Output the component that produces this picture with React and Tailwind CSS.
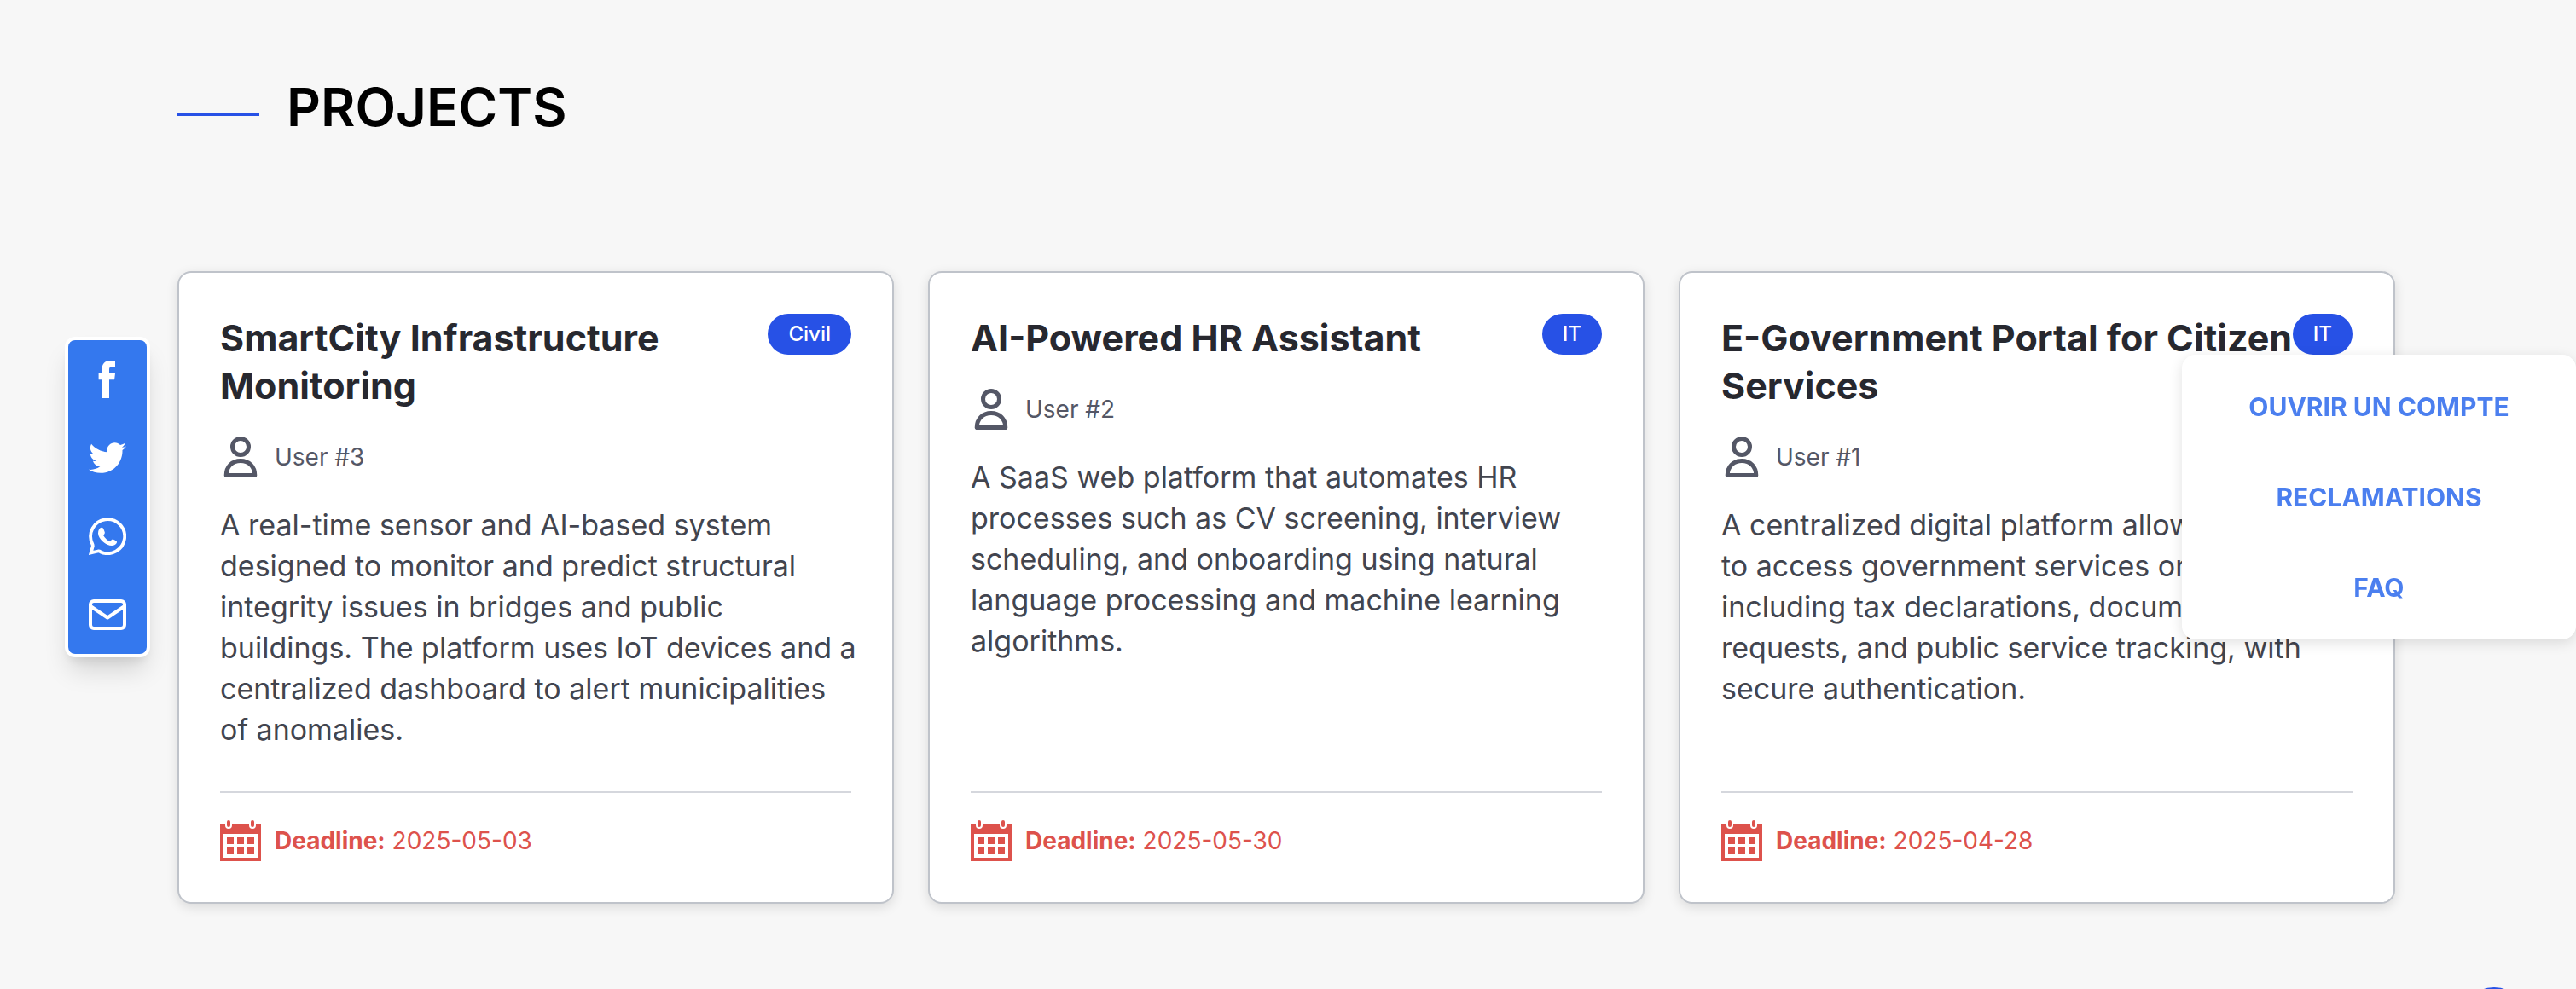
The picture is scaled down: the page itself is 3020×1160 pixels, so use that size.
const projects = [
  {
    title: "SmartCity Infrastructure\nMonitoring",
    tag: "Civil",
    user: "User #3",
    text: "A real-time sensor and AI-based system\ndesigned to monitor and predict structural\nintegrity issues in bridges and public\nbuildings. The platform uses IoT devices and a\ncentralized dashboard to alert municipalities\nof anomalies.",
    deadline: "2025-05-03",
  },
  {
    title: "AI-Powered HR Assistant",
    tag: "IT",
    user: "User #2",
    text: "A SaaS web platform that automates HR\nprocesses such as CV screening, interview\nscheduling, and onboarding using natural\nlanguage processing and machine learning\nalgorithms.",
    deadline: "2025-05-30",
  },
  {
    title: "E-Government Portal for Citizen\nServices",
    tag: "IT",
    user: "User #1",
    text: "A centralized digital platform allowing citizens\nto access government services online,\nincluding tax declarations, document\nrequests, and public service tracking, with\nsecure authentication.",
    deadline: "2025-04-28",
  },
];

function UserIcon() {
  return (
    <svg viewBox="0 0 48 48" className="size-12 shrink-0" fill="none" stroke="currentColor" strokeWidth="5" aria-hidden="true">
      <circle cx="24" cy="12" r="9.5" />
      <path d="M7.2 45.6C7.2 35.5 14 28.5 24 28.5S40.8 35.5 40.8 45.6Z" strokeLinejoin="round" />
    </svg>
  );
}

function CalendarIcon() {
  return (
    <svg viewBox="0 0 48 48" className="size-12 shrink-0" fill="currentColor" aria-hidden="true">
      <path
        fillRule="evenodd"
        d="M0 4h6v2a4 4 0 0 0 8 0V4h20v2a4 4 0 0 0 8 0V4h6v44H0ZM4 16v28h40V16Z"
      />
      <rect x="8" y="0" width="4" height="8" rx="2" />
      <rect x="36" y="0" width="4" height="8" rx="2" />
      <path d="M8 20h8v8H8ZM20 20h8v8h-8ZM32 20h8v8h-8ZM8 32h8v8H8ZM20 32h8v8h-8ZM32 32h8v8h-8Z" />
    </svg>
  );
}

const socials = [
  {
    label: "Facebook",
    icon: (
      <path
        fill="currentColor"
        d="M15.4 44V22.2h-3.8v-7.1h3.8v-4.6C15.4 4 19 0 25.2 0H31v7.2h-3.6c-2.6 0-3.4 1-3.4 3.4v4.5h7l-.9 7.1H24V44Z"
      />
    ),
  },
  {
    label: "Twitter",
    icon: (
      <path
        fill="currentColor"
        transform="scale(.0859375)"
        d="M459.37 151.716c.325 4.548.325 9.097.325 13.645 0 138.72-105.583 298.558-298.558 298.558-59.452 0-114.68-17.219-161.137-47.106 8.447.974 16.568 1.299 25.34 1.299 49.055 0 94.213-16.568 130.274-44.832-46.132-.975-84.792-31.188-98.112-72.772 6.498.974 12.995 1.624 19.818 1.624 9.421 0 18.843-1.3 27.614-3.573-48.081-9.747-84.143-51.98-84.143-102.985v-1.299c13.969 7.797 30.214 12.67 47.431 13.319-28.264-18.843-46.781-51.005-46.781-87.391 0-19.492 5.197-37.36 14.294-52.954 51.655 63.675 129.3 105.258 216.365 109.807-1.624-7.797-2.599-15.918-2.599-24.04 0-57.828 46.782-104.934 104.934-104.934 30.213 0 57.502 12.67 76.67 33.137 23.715-4.548 46.456-13.32 66.599-25.34-7.798 24.366-24.366 44.833-46.132 57.827 21.117-2.273 41.584-8.122 60.426-16.243-14.292 20.791-32.161 39.308-52.628 54.253z"
      />
    ),
  },
  {
    label: "WhatsApp",
    icon: (
      <>
        <path
          fill="none"
          stroke="currentColor"
          strokeWidth="3.8"
          d="M2.6 41.4 4.800 33.600Q4.800 32 4 30.500A20 20 0 1 1 14 40.400Q12.500 39.300 11 39.500Z"
        />
        <path
          fill="currentColor"
          d="M11 18.500C11 14.500 12.600 12.200 14.500 11.900c1.400-.2 2.300.3 2.900 1.700l1.300 3.400c.4 1.200 0 2-1.600 4 2 3.300 4.500 5.600 8 7.300 1.700-2.600 2.600-3.100 3.900-2.500l3.300 1.700c.8.500.9 1.200.5 2.300-.7 2-3 3.200-5.800 3.200C20.500 33 11 25 11 18.500Z"
        />
      </>
    ),
  },
  {
    label: "E-mail",
    icon: (
      <g fill="none" stroke="currentColor" strokeWidth="4" strokeLinejoin="round">
        <rect x="2" y="6" width="40" height="32" rx="4" />
        <path d="M2 12 22 25.500 42 12" />
      </g>
    ),
  },
];

function SocialBar() {
  return (
    <nav
      aria-label="Social"
      className="fixed top-[395px] left-[76px] flex flex-col overflow-hidden rounded-xl border-4 border-white bg-[#3478ee] text-white shadow-[0_20px_30px_-6px_rgba(0,0,0,0.15),0_8px_12px_-4px_rgba(0,0,0,0.08)]"
    >
      {socials.map((s) => (
        <a key={s.label} href="#" aria-label={s.label} className="flex size-[92px] items-center justify-center">
          <svg viewBox="0 0 44 44" className="size-11" aria-hidden="true">
            {s.icon}
          </svg>
        </a>
      ))}
    </nav>
  );
}

function QuickMenu() {
  return (
    <nav
      aria-label="Menu"
      className="fixed top-[416px] right-0 flex w-[462px] flex-col items-center gap-16 rounded-2xl bg-white py-10 text-[30px] leading-[42px] font-bold text-[#4b7fef] shadow-[0_4px_16px_rgba(0,0,0,0.12)]"
    >
      <a href="#">OUVRIR UN COMPTE</a>
      <a href="#">RECLAMATIONS</a>
      <a href="#">FAQ</a>
    </nav>
  );
}

function ProjectCard({ project }) {
  return (
    <article className="flex flex-col rounded-2xl border-2 border-[#bfc3ca] bg-white p-12 shadow-[0_4px_14px_rgba(0,0,0,0.12)]">
      <div className="flex items-start justify-between">
        <h3 className="text-[43px] leading-14 font-bold whitespace-pre text-[#27282f]">{project.title}</h3>
        <span className="shrink-0 rounded-full bg-[#2751e6] px-6 text-[24px] leading-12 font-medium text-white">
          {project.tag}
        </span>
      </div>
      <div className="mt-8 flex items-center gap-4 text-[28px] leading-10 text-[#545766]">
        <UserIcon />
        {project.user}
      </div>
      <p className="mt-8 mb-12 text-[34px] leading-12 whitespace-pre text-[#42454f]">{project.text}</p>
      <div className="mt-auto flex items-center gap-4 border-t-2 border-[#d5d7dd] pt-8 text-[28px] leading-10 text-[#dd524c]">
        <CalendarIcon />
        <p>
          <strong className="font-bold">Deadline:</strong> {project.deadline}
        </p>
      </div>
    </article>
  );
}

export default function App() {
  return (
    <div className="min-h-screen bg-[#f7f7f7] font-[Inter,sans-serif]">
      <main className="pt-[90px] pr-[212px] pb-[100px] pl-[208px]">
        <header className="mb-[156px] flex items-center gap-8">
          <span className="mt-4 h-1 w-24 bg-[#2751e6]" />
          <h2 className="text-[62px] leading-[72px] font-semibold text-black">PROJECTS</h2>
        </header>
        <section className="grid grid-cols-3 gap-10">
          {projects.map((p) => (
            <ProjectCard key={p.title} project={p} />
          ))}
        </section>
      </main>
      <SocialBar />
      <QuickMenu />
      <button
        type="button"
        aria-label="Back to top"
        className="fixed right-14 -bottom-[78px] size-20 rounded-full bg-[#2751e6]"
      />
    </div>
  );
}
